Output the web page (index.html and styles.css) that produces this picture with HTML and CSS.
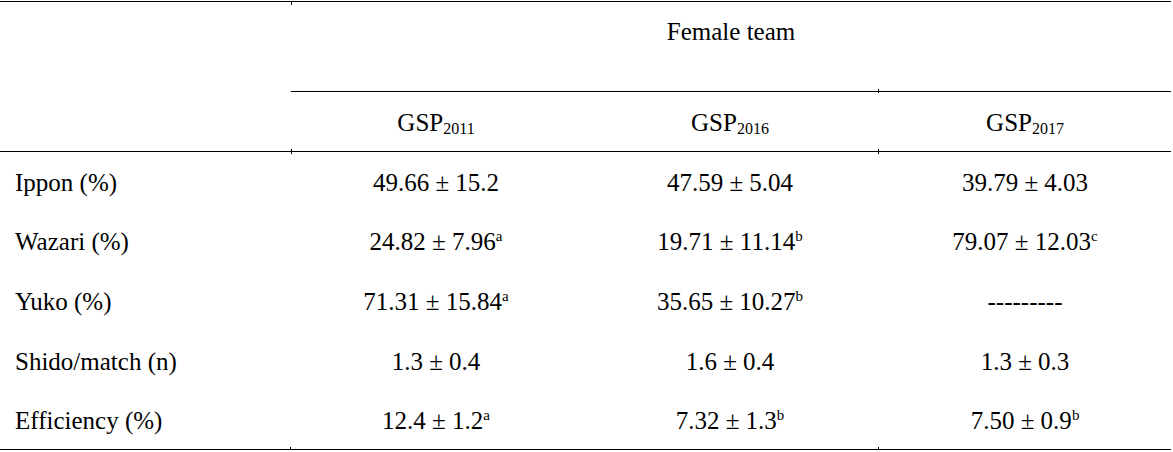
FILE: index.html
```html
<!DOCTYPE html>
<html>
<head>
<meta charset="utf-8">
<link rel="stylesheet" href="styles.css">
</head>
<body>
<table class="results">
  <colgroup>
    <col class="c-label">
    <col class="c-2011">
    <col class="c-2016">
    <col class="c-2017">
  </colgroup>
  <thead>
    <tr class="row-team">
      <th class="label-head tick-top" rowspan="2"></th>
      <th class="team" colspan="3">Female team</th>
    </tr>
    <tr class="row-gsp">
      <th class="gsp">GSP<sub>2011</sub></th>
      <th class="gsp">GSP<sub>2016</sub></th>
      <th class="gsp tick-l">GSP<sub>2017</sub></th>
    </tr>
  </thead>
  <tbody>
    <tr>
      <td class="label">Ippon (%)</td>
      <td class="val">49.66 ± 15.2</td>
      <td class="val">47.59 ± 5.04</td>
      <td class="val">39.79 ± 4.03</td>
    </tr>
    <tr>
      <td class="label">Wazari (%)</td>
      <td class="val">24.82 ± 7.96<sup>a</sup></td>
      <td class="val">19.71 ± 11.14<sup>b</sup></td>
      <td class="val">79.07 ± 12.03<sup>c</sup></td>
    </tr>
    <tr>
      <td class="label">Yuko (%)</td>
      <td class="val">71.31 ± 15.84<sup>a</sup></td>
      <td class="val">35.65 ± 10.27<sup>b</sup></td>
      <td class="val">---------</td>
    </tr>
    <tr>
      <td class="label">Shido/match (n)</td>
      <td class="val">1.3 ± 0.4</td>
      <td class="val">1.6 ± 0.4</td>
      <td class="val">1.3 ± 0.3</td>
    </tr>
    <tr class="row-last">
      <td class="label">Efficiency (%)</td>
      <td class="val tick-bl">12.4 ± 1.2<sup>a</sup></td>
      <td class="val">7.32 ± 1.3<sup>b</sup></td>
      <td class="val tick-bl">7.50 ± 0.9<sup>b</sup></td>
    </tr>
  </tbody>
</table>
</body>
</html>
```
FILE: styles.css
```css
html, body {
  margin: 0;
  padding: 0;
  background: #ffffff;
}

body {
  padding-top: 1px;
  font-family: "Liberation Serif", "Times New Roman", serif;
  font-size: 25px;
  color: #000000;
}

.results {
  width: 1171px;
  table-layout: fixed;
  border-collapse: collapse;
  border-top: 1px solid #000;
}

.c-label { width: 291px; }
.c-2011 { width: 290px; }
.c-2016 { width: 298px; }
.c-2017 { width: 292px; }

.results th,
.results td {
  box-sizing: border-box;
  padding: 0;
  font-weight: normal;
  line-height: 28px;
  text-align: center;
  position: relative;
}

.row-team th {
  height: 90px;
}

.results th.team {
  vertical-align: top;
  padding-top: 16px;
  border-bottom: 1px solid #000;
}

.label-head {
  border-bottom: 1px solid #000;
}

.row-gsp th {
  height: 60px;
  vertical-align: middle;
  border-bottom: 1px solid #000;
  padding-top: 2px;
}

.results tbody td {
  height: 59.6px;
  vertical-align: middle;
  padding-top: 3px;
}

.results tbody td.label {
  text-align: left;
  padding-left: 15px;
}

.row-last td {
  border-bottom: 1px solid #000;
}

sub {
  font-size: 16px;
  vertical-align: -3px;
  line-height: 0;
}

sup {
  font-size: 15px;
  vertical-align: 9px;
  line-height: 0;
}

/* small tick marks where column rules meet the horizontal lines */
.tick-top::after {
  content: "";
  position: absolute;
  right: -1px;
  top: 0;
  width: 1px;
  height: 3px;
  background: #000;
}

.label-head::before {
  content: "";
  position: absolute;
  right: -1px;
  bottom: -3px;
  width: 1px;
  height: 5px;
  background: #000;
}

.tick-l::before {
  content: "";
  position: absolute;
  left: -1px;
  top: -3px;
  width: 1px;
  height: 4px;
  background: #000;
}

.tick-l::after {
  content: "";
  position: absolute;
  left: -1px;
  bottom: -3px;
  width: 1px;
  height: 5px;
  background: #000;
}

.tick-bl::before {
  content: "";
  position: absolute;
  left: -1px;
  bottom: -1px;
  width: 1px;
  height: 3px;
  background: #000;
}
```
